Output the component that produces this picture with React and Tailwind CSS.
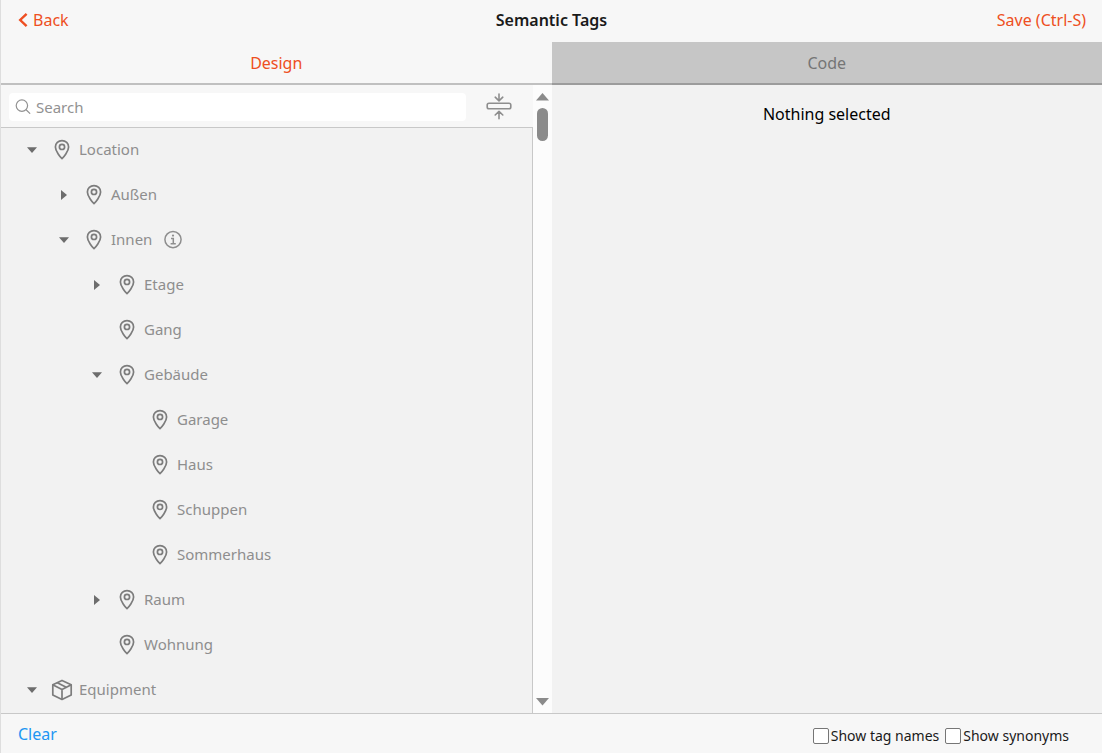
import React, { useState } from "react";

const TREE = [
  { name: "Location", level: 0, icon: "pin", state: "open" },
  { name: "Außen", level: 1, icon: "pin", state: "closed" },
  { name: "Innen", level: 1, icon: "pin", state: "open", info: true },
  { name: "Etage", level: 2, icon: "pin", state: "closed" },
  { name: "Gang", level: 2, icon: "pin" },
  { name: "Gebäude", level: 2, icon: "pin", state: "open" },
  { name: "Garage", level: 3, icon: "pin" },
  { name: "Haus", level: 3, icon: "pin" },
  { name: "Schuppen", level: 3, icon: "pin" },
  { name: "Sommerhaus", level: 3, icon: "pin" },
  { name: "Raum", level: 2, icon: "pin", state: "closed" },
  { name: "Wohnung", level: 2, icon: "pin" },
  { name: "Equipment", level: 0, icon: "box", state: "open" },
];

const INDENT = ["pl-[19px]", "pl-[51px]", "pl-[84px]", "pl-[117px]"];

function PinIcon() {
  return (
    <svg className="size-6 shrink-0" viewBox="0 0 24 24" fill="none" stroke="#7c7c7c" strokeWidth="1.7" aria-hidden="true">
      <path d="M12 20.6C10.6 19.4 5.4 13.2 5.4 8.9C5.4 5.2 8.3 2.6 12 2.6S18.6 5.2 18.6 8.9C18.6 13.2 13.4 19.4 12 20.6Z" strokeLinejoin="round" />
      <circle cx="12" cy="8.9" r="2.6" />
    </svg>
  );
}

function BoxIcon() {
  return (
    <svg className="size-6 shrink-0" viewBox="0 0 24 24" fill="none" stroke="#7c7c7c" strokeWidth="1.7" strokeLinejoin="round" strokeLinecap="round" aria-hidden="true">
      <path d="M12 2.4L21.2 6.8V16.9L12 21.5L2.8 16.9V6.8Z" />
      <path d="M3.2 7.1L12 11.6L20.8 7.1M12 11.6V21.2M7.4 4.8L16.2 9.3" />
    </svg>
  );
}

function InfoIcon() {
  return (
    <svg className="size-5 shrink-0" viewBox="0 0 20 20" fill="none" stroke="#8e8e8e" strokeWidth="1.5" aria-hidden="true">
      <circle cx="10" cy="9.6" r="8.1" />
      <path d="M8 8.4H10.3V13.7M7.6 13.7H12.8" />
      <circle cx="10" cy="5.6" r="1.1" fill="#8e8e8e" stroke="none" />
    </svg>
  );
}

function SearchIcon() {
  return (
    <svg className="size-4 shrink-0" viewBox="0 0 16 16" fill="none" stroke="#929292" strokeWidth="1.2" strokeLinecap="round" aria-hidden="true">
      <circle cx="6.9" cy="6.6" r="5.7" />
      <path d="M11.1 10.8L14.8 14.4" />
    </svg>
  );
}

function CollapseIcon() {
  return (
    <svg className="h-7 w-[26px]" viewBox="0 0 26 28" fill="none" stroke="#8e8e8e" strokeWidth="1.6" strokeLinecap="round" strokeLinejoin="round" aria-hidden="true">
      <path d="M13 1V7.6M9.2 4.2L13 7.8L16.8 4.2" />
      <rect x="1.2" y="10.2" width="23.6" height="5.6" rx="1.8" />
      <path d="M13 25.8V18.6M9.2 22L13 18.4L16.8 22" />
    </svg>
  );
}

function TreeRow({ node }) {
  return (
    <li className={`flex h-[45px] items-center ${INDENT[node.level]}`}>
      <span className="flex w-6 justify-center">
        {node.state && (
          <button type="button" aria-label={`Toggle ${node.name}`} className="flex h-6 w-6 items-center justify-center">
            <svg className="size-[10px]" viewBox="0 0 10 10" fill="#6d6d6d" aria-hidden="true">
              {node.state === "open" ? <path d="M0 2.2H10L5 8Z" /> : <path d="M2 0V10L8 5Z" />}
            </svg>
          </button>
        )}
      </span>
      <span className="ml-1.5 flex items-center gap-[5px]">
        {node.icon === "pin" ? <PinIcon /> : <BoxIcon />}
        <span>{node.name}</span>
      </span>
      {node.info && (
        <button type="button" aria-label={`About ${node.name}`} className="ml-[11px]">
          <InfoIcon />
        </button>
      )}
    </li>
  );
}

function Scrollbar() {
  return (
    <div className="flex w-[19px] shrink-0 flex-col items-center bg-[#fcfcfc] pt-2 pb-[7px]" aria-hidden="true">
      <svg className="h-2 w-[13px]" viewBox="0 0 13 8" fill="#8b8b8b"><path d="M6.5 0L13 7.5H0Z" /></svg>
      <div className="mt-[7px] h-[33px] w-[11px] rounded-full bg-[#8b8b8b]" />
      <svg className="mt-auto h-2 w-[13px]" viewBox="0 0 13 8" fill="#8b8b8b"><path d="M0 0H13L6.5 7.5Z" /></svg>
    </div>
  );
}

function Option({ label }) {
  const [on, setOn] = useState(false);
  return (
    <label className="flex items-center gap-0.5">
      <input
        type="checkbox"
        checked={on}
        onChange={() => setOn(!on)}
        className="size-4 appearance-none rounded-[2px] border border-[#767676] bg-white checked:bg-[#2196f3]"
      />
      {label}
    </label>
  );
}

export default function App() {
  return (
    <div className="flex h-screen flex-col overflow-hidden border-l border-[#dedede] bg-[#f2f2f2] font-['Noto_Sans',sans-serif] text-base text-[#1a1a1a]">
      <header className="grid h-[42px] shrink-0 grid-cols-3 items-center bg-[#f7f7f7] px-4 pb-0.5">
        <a href="#back" className="flex items-center gap-1 justify-self-start text-[#ee4f22]">
          <svg className="h-4 w-3" viewBox="0 0 12 16" fill="none" stroke="currentColor" strokeWidth="2.4" aria-hidden="true">
            <path d="M9.6 1.8L3.2 8L9.6 14.2" />
          </svg>
          Back
        </a>
        <h1 className="justify-self-center font-semibold">Semantic Tags</h1>
        <button type="button" className="justify-self-end text-[#ee4f22]">Save (Ctrl-S)</button>
      </header>

      <nav className="grid h-[43px] shrink-0 grid-cols-2">
        <a href="#design" className="flex items-center justify-center border-b-2 border-[#c0c0c0] bg-[#f7f7f7] text-[#ee4f22]">Design</a>
        <a href="#code" className="flex items-center justify-center border-b-2 border-[#9c9c9c] bg-[#c6c6c6] text-[#757575]">Code</a>
      </nav>

      <main className="grid min-h-0 flex-1 grid-cols-2">
        <section className="flex min-h-0">
          <div className="flex min-w-0 flex-1 flex-col">
            <div className="flex h-[43px] shrink-0 items-center border-b border-[#c8c8c8] bg-[#f7f7f7] pt-0.5 pr-[21px] pl-2">
              <label className="flex h-7 min-w-0 flex-1 items-center gap-[5px] rounded-sm bg-white px-1.5">
                <SearchIcon />
                <input type="search" aria-label="Search" placeholder="Search" className="min-w-0 flex-1 bg-transparent text-[15px] leading-5 outline-none placeholder:text-[#929292]" />
              </label>
              <button type="button" aria-label="Collapse all" className="ml-5"><CollapseIcon /></button>
            </div>
            <ul className="-mt-px min-h-0 flex-1 overflow-hidden border-r border-[#c8c8c8] text-[15px] text-[#8e8e8e]">
              {TREE.map((node) => <TreeRow key={node.name} node={node} />)}
            </ul>
          </div>
          <Scrollbar />
        </section>
        <section className="pt-[17px] text-center text-black">
          <p>Nothing selected</p>
        </section>
      </main>

      <footer className="flex h-10 shrink-0 items-center justify-between border-t border-[#c8c8c8] bg-[#f7f7f7] pr-[33px] pl-[17px]">
        <button type="button" className="text-[#2196f3]">Clear</button>
        <div className="flex gap-1.5 pt-1 text-sm">
          <Option label="Show tag names" />
          <Option label="Show synonyms" />
        </div>
      </footer>
    </div>
  );
}
